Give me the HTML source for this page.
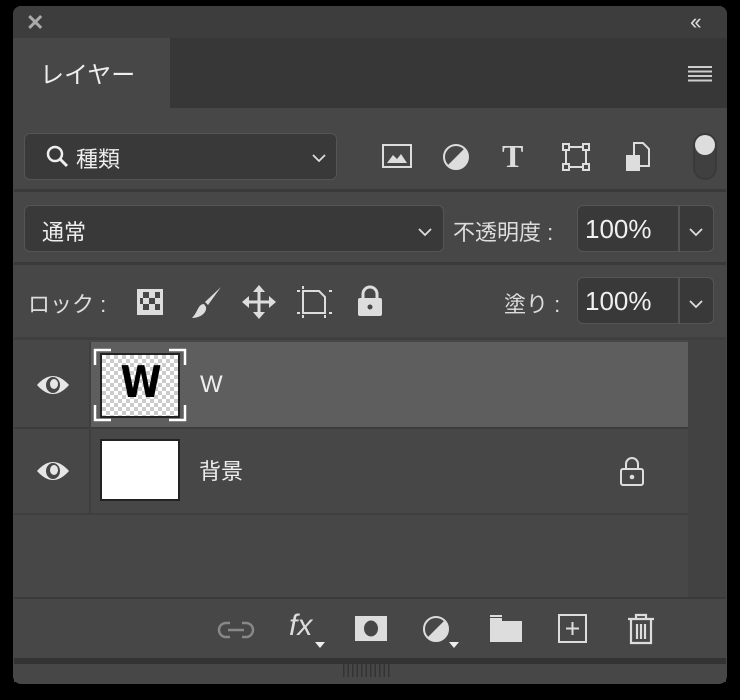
<!DOCTYPE html>
<html><head><meta charset="utf-8"><style>
*{margin:0;padding:0;box-sizing:border-box}
body{width:740px;height:700px;background:#000;position:relative;overflow:hidden;font-family:"Liberation Sans","Noto Sans CJK JP",sans-serif;color:#e6e6e6}
.a{position:absolute}
.box{position:absolute;background:#393939;border:1.5px solid #555;border-radius:6px}
svg{position:absolute;overflow:visible}
</style></head><body>
<div class="a" style="left:13px;top:6px;width:714px;height:678px;background:#474747;border-radius:8px;overflow:hidden">
 <div class="a" style="left:0;top:0;width:714px;height:32px;background:#3d3d3d"></div>
 <div class="a" style="left:0;top:32px;width:714px;height:70px;background:#373737"></div>
 <div class="a" style="left:0;top:32px;width:157px;height:72px;background:#474747"></div>
</div>
<div class="a" style="left:26px;top:10px;font-size:22px;font-weight:bold;color:#aaa">✕</div>
<div class="a" style="left:690px;top:9px;font-size:22px;color:#ddd;letter-spacing:-3px">‹‹</div>
<div class="a" style="left:40px;top:55px;font-size:24px;color:#eee">レイヤー</div>
<svg style="left:688px;top:66px" width="24" height="16"><g stroke="#ccc" stroke-width="2"><line x1="0" y1="1" x2="24" y2="1"/><line x1="0" y1="5.5" x2="24" y2="5.5"/><line x1="0" y1="10" x2="24" y2="10"/><line x1="0" y1="14.5" x2="24" y2="14.5"/></g></svg>

<div class="box" style="left:24px;top:133px;width:313px;height:47px"></div>
<svg style="left:46px;top:145px" width="24" height="24"><circle cx="9" cy="9" r="7" fill="none" stroke="#eee" stroke-width="2.5"/><line x1="14" y1="14" x2="21" y2="21" stroke="#eee" stroke-width="3"/></svg>
<div class="a" style="left:76px;top:142px;font-size:22px;color:#eee">種類</div>
<svg style="left:312px;top:154px" width="14" height="8"><path d="M1 1L7 7L13 1" fill="none" stroke="#ddd" stroke-width="1.8"/></svg>
<svg style="left:382px;top:144px" width="30" height="25"><rect x="1" y="1" width="28" height="22" fill="none" stroke="#ddd" stroke-width="2"/><path d="M5 19L11 11L15 15L19 10L25 19Z" fill="#ddd"/></svg>
<svg style="left:442px;top:143px" width="28" height="28"><circle cx="14" cy="14" r="12" fill="none" stroke="#ddd" stroke-width="2"/><path d="M22.5 5.5A12 12 0 0 1 5.5 22.5Z" fill="#ddd"/></svg>
<div class="a" style="left:502px;top:138px;font-size:32px;font-family:'Liberation Serif',serif;font-weight:bold;color:#ddd">T</div>
<svg style="left:562px;top:143px" width="28" height="28"><rect x="4" y="4" width="20" height="20" fill="none" stroke="#ddd" stroke-width="2"/><g fill="#474747" stroke="#ddd" stroke-width="2"><rect x="1" y="1" width="6" height="6"/><rect x="21" y="1" width="6" height="6"/><rect x="1" y="21" width="6" height="6"/><rect x="21" y="21" width="6" height="6"/></g></svg>
<svg style="left:625px;top:142px" width="26" height="30"><path d="M9 1H18L24 7V24H9Z" fill="none" stroke="#ddd" stroke-width="2"/><rect x="1" y="13" width="14" height="16" fill="#ddd"/></svg>
<div class="a" style="left:693px;top:133px;width:24px;height:47px;border:2px solid #3a3a3a;background:#404040;border-radius:12px"></div>
<div class="a" style="left:695px;top:135px;width:20px;height:20px;border-radius:50%;background:#ddd"></div>

<div class="a" style="left:14px;top:189px;width:712px;height:3px;background:#3a3a3a"></div>
<div class="box" style="left:24px;top:205px;width:420px;height:47px"></div>
<div class="a" style="left:42px;top:215px;font-size:22px;color:#eee">通常</div>
<svg style="left:418px;top:228px" width="14" height="8"><path d="M1 1L7 7L13 1" fill="none" stroke="#ddd" stroke-width="1.8"/></svg>
<div class="a" style="left:453px;top:215px;font-size:22px;color:#ddd">不透明度 :</div>
<div class="box" style="left:577px;top:205px;width:137px;height:47px"></div>
<div class="a" style="left:678px;top:206px;width:1.5px;height:45px;background:#555"></div>
<div class="a" style="left:585px;top:214px;font-size:26px;color:#f0f0f0">100%</div>
<svg style="left:689px;top:228px" width="14" height="8"><path d="M1 1L7 7L13 1" fill="none" stroke="#ddd" stroke-width="1.8"/></svg>

<div class="a" style="left:14px;top:262px;width:712px;height:3px;background:#3a3a3a"></div>
<div class="a" style="left:28px;top:287px;font-size:22px;color:#ddd">ロック :</div>
<svg style="left:136px;top:288px" width="28" height="28"><rect x="1" y="1" width="26" height="26" fill="#ddd"/><g fill="#474747"><rect x="7" y="4" width="6" height="6"/><rect x="13" y="10" width="6" height="6"/><rect x="7" y="16" width="6" height="6"/><rect x="19" y="4" width="5" height="6"/><rect x="19" y="16" width="5" height="6"/><rect x="4" y="10" width="3" height="6"/></g></svg>
<svg style="left:188px;top:285px" width="36" height="36"><path d="M33 2L20 20L17 17Z" fill="#ddd"/><path d="M16 19C10 19 10 27 4 33C12 33 19 28 18 22Z" fill="#ddd"/></svg>
<svg style="left:242px;top:285px" width="34" height="34"><g fill="none" stroke="#ddd" stroke-width="3"><line x1="17" y1="4" x2="17" y2="30"/><line x1="4" y1="17" x2="30" y2="17"/></g><g fill="#ddd"><path d="M17 0L23 7H11Z"/><path d="M17 34L23 27H11Z"/><path d="M0 17L7 11V23Z"/><path d="M34 17L27 11V23Z"/></g></svg>
<svg style="left:297px;top:286px" width="36" height="32"><path d="M6 5H22L28 11V27H6Z" fill="none" stroke="#ddd" stroke-width="2"/><g fill="#ddd"><rect x="0" y="4" width="3" height="2"/><rect x="0" y="26" width="3" height="2"/><rect x="32" y="26" width="3" height="2"/><rect x="32" y="4" width="3" height="2"/><rect x="5" y="0" width="2" height="3"/><rect x="27" y="29" width="2" height="3"/><rect x="5" y="29" width="2" height="3"/></g></svg>
<svg style="left:357px;top:285px" width="26" height="32"><path d="M6 14V9A7 7 0 0 1 20 9V14" fill="none" stroke="#ddd" stroke-width="3"/><rect x="1" y="13" width="24" height="18" rx="2" fill="#ddd"/><circle cx="13" cy="22" r="2.5" fill="#474747"/></svg>
<div class="a" style="left:504px;top:287px;font-size:22px;color:#ddd">塗り :</div>
<div class="box" style="left:577px;top:277px;width:137px;height:47px"></div>
<div class="a" style="left:678px;top:278px;width:1.5px;height:45px;background:#555"></div>
<div class="a" style="left:585px;top:286px;font-size:26px;color:#f0f0f0">100%</div>
<svg style="left:689px;top:300px" width="14" height="8"><path d="M1 1L7 7L13 1" fill="none" stroke="#ddd" stroke-width="1.8"/></svg>

<div class="a" style="left:14px;top:337px;width:712px;height:3px;background:#3f3f3f"></div>
<div class="a" style="left:688px;top:340px;width:38px;height:258px;background:#424242"></div>
<div class="a" style="left:14px;top:342px;width:76px;height:86px;background:#474747"></div>
<div class="a" style="left:90px;top:342px;width:598px;height:85px;background:#5e5e5e"></div>
<div class="a" style="left:14px;top:427px;width:674px;height:2px;background:#3c3c3c"></div>
<div class="a" style="left:89px;top:342px;width:2px;height:172px;background:#3f3f3f"></div>
<div class="a" style="left:14px;top:513px;width:674px;height:2px;background:#3f3f3f"></div>
<svg style="left:36px;top:373px" width="34" height="24"><path d="M1 12Q17 -6 33 12Q17 30 1 12Z" fill="#e6e6e6"/><ellipse cx="17" cy="12" rx="7" ry="8" fill="#474747"/><ellipse cx="18" cy="11" rx="4" ry="5" fill="#e6e6e6"/></svg>
<svg style="left:36px;top:459px" width="34" height="24"><path d="M1 12Q17 -6 33 12Q17 30 1 12Z" fill="#e6e6e6"/><ellipse cx="17" cy="12" rx="7" ry="8" fill="#474747"/><ellipse cx="18" cy="11" rx="4" ry="5" fill="#e6e6e6"/></svg>
<div class="a" style="left:100px;top:353px;width:80px;height:65px;border:2px solid #222;background-color:#fff;background-image:linear-gradient(45deg,#ccc 25%,transparent 25%,transparent 75%,#ccc 75%),linear-gradient(45deg,#ccc 25%,transparent 25%,transparent 75%,#ccc 75%);background-size:8px 8px;background-position:0 0,4px 4px"></div>
<svg style="left:94px;top:349px" width="92" height="72"><g fill="none" stroke="#fff" stroke-width="2.5"><path d="M1 16V1H17"/><path d="M75 1H91V16"/><path d="M1 56V71H17"/><path d="M75 71H91V56"/></g></svg>
<div class="a" style="left:114px;top:353px;width:54px;font-size:44px;font-weight:900;color:#000;font-family:'DejaVu Sans',sans-serif;text-align:center;line-height:60px;transform:scaleX(0.85)">W</div>
<div class="a" style="left:200px;top:371px;font-size:24px;color:#eee">W</div>
<div class="a" style="left:100px;top:439px;width:80px;height:62px;border:2px solid #222;background:#fff"></div>
<div class="a" style="left:199px;top:454px;font-size:22px;color:#eee">背景</div>
<svg style="left:619px;top:456px" width="26" height="30"><path d="M7 13V8A6 6 0 0 1 19 8V13" fill="none" stroke="#ddd" stroke-width="2"/><rect x="2" y="13" width="22" height="16" rx="2" fill="none" stroke="#ddd" stroke-width="2"/><circle cx="13" cy="21" r="2.3" fill="#ddd"/></svg>

<div class="a" style="left:14px;top:597px;width:712px;height:2px;background:#3a3a3a"></div>
<svg style="left:218px;top:620px" width="36" height="20"><g fill="none" stroke="#888" stroke-width="2.5"><path d="M12 3H8A7 7 0 0 0 8 17H12"/><path d="M24 3H28A7 7 0 0 1 28 17H24"/><line x1="10" y1="10" x2="26" y2="10"/></g></svg>
<div class="a" style="left:289px;top:609px;font-size:30px;font-style:italic;color:#ddd;font-family:'Liberation Sans',sans-serif">fx</div>
<svg style="left:315px;top:642px" width="10" height="6"><path d="M0 0H10L5 6Z" fill="#eee"/></svg>
<svg style="left:355px;top:616px" width="32" height="25"><rect width="32" height="25" fill="#ddd"/><ellipse cx="16" cy="12.5" rx="7" ry="8" fill="#474747"/></svg>
<svg style="left:423px;top:615px" width="30" height="30"><circle cx="13" cy="14" r="12" fill="none" stroke="#ddd" stroke-width="2"/><path d="M21.5 5.5A12 12 0 0 1 4.5 22.5Z" fill="#ddd"/></svg>
<svg style="left:449px;top:642px" width="10" height="6"><path d="M0 0H10L5 6Z" fill="#eee"/></svg>
<svg style="left:490px;top:615px" width="32" height="27"><path d="M0 3H12V6H32V27H0Z" fill="#ddd"/><rect x="0" y="0" width="12" height="2" fill="#ddd"/></svg>
<svg style="left:558px;top:614px" width="30" height="30"><rect x="1" y="1" width="27" height="27" fill="none" stroke="#ddd" stroke-width="2"/><g stroke="#ddd" stroke-width="2"><line x1="14.5" y1="8" x2="14.5" y2="21"/><line x1="8" y1="14.5" x2="21" y2="14.5"/></g></svg>
<svg style="left:626px;top:613px" width="30" height="32"><g fill="none" stroke="#ddd" stroke-width="2.2"><path d="M2 6H28"/><path d="M10 6V2H20V6"/><path d="M5 7V30H25V7"/><path d="M11 11V26M15 11V26M19 11V26"/></g></svg>

<div class="a" style="left:14px;top:658px;width:712px;height:6px;background:#333"></div>
<div class="a" style="left:14px;top:664px;width:712px;height:18px;background:#474747"></div>
<div class="a" style="left:343px;top:664px;width:48px;height:13px;background:repeating-linear-gradient(90deg,#333 0 1.5px,transparent 1.5px 4.5px)"></div>
</body></html>
